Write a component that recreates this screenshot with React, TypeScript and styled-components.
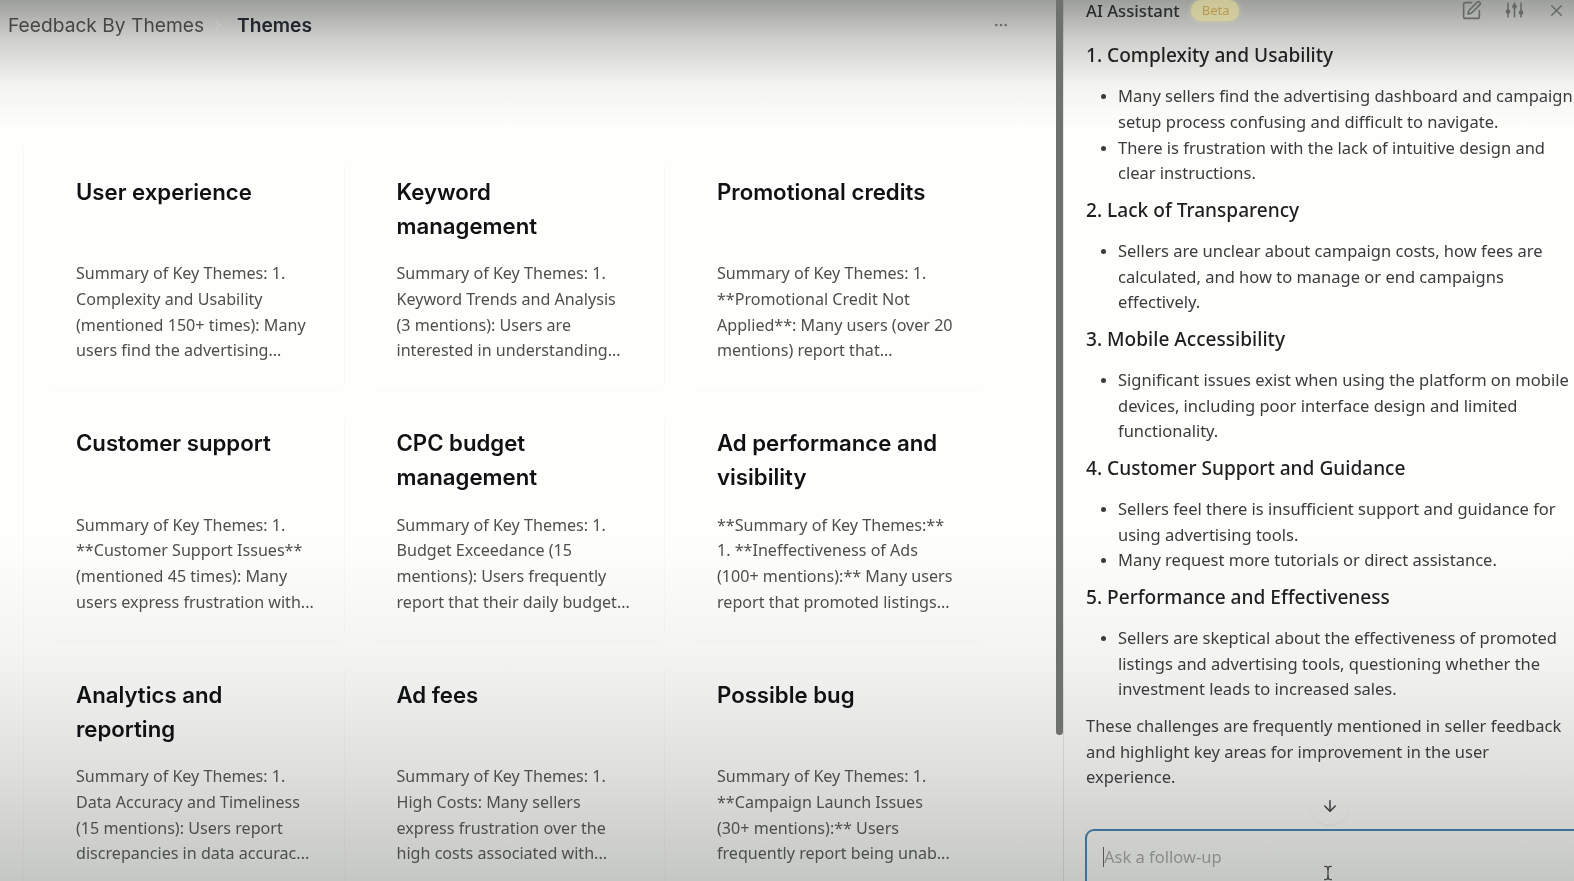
import { ArrowDown, ChevronRight, Ellipsis, SquarePen, TextCursor, X } from 'lucide-react';
import styled, { createGlobalStyle } from 'styled-components';

const themes = [
  {
    title: 'User experience',
    lines: ['Summary of Key Themes: 1.', 'Complexity and Usability', '(mentioned 150+ times): Many', 'users find the advertising...'],
  },
  {
    title: 'Keyword management',
    lines: ['Summary of Key Themes: 1.', 'Keyword Trends and Analysis', '(3 mentions): Users are', 'interested in understanding...'],
  },
  {
    title: 'Promotional credits',
    lines: ['Summary of Key Themes: 1.', '**Promotional Credit Not', 'Applied**: Many users (over 20', 'mentions) report that...'],
  },
  {
    title: 'Customer support',
    lines: ['Summary of Key Themes: 1.', '**Customer Support Issues**', '(mentioned 45 times): Many', 'users express frustration with...'],
  },
  {
    title: 'CPC budget management',
    lines: ['Summary of Key Themes: 1.', 'Budget Exceedance (15', 'mentions): Users frequently', 'report that their daily budget...'],
  },
  {
    title: 'Ad performance and visibility',
    lines: ['**Summary of Key Themes:**', '1. **Ineffectiveness of Ads', '(100+ mentions):** Many users', 'report that promoted listings...'],
  },
  {
    title: 'Analytics and reporting',
    lines: ['Summary of Key Themes: 1.', 'Data Accuracy and Timeliness', '(15 mentions): Users report', 'discrepancies in data accurac...'],
  },
  {
    title: 'Ad fees',
    lines: ['Summary of Key Themes: 1.', 'High Costs: Many sellers', 'express frustration over the', 'high costs associated with...'],
  },
  {
    title: 'Possible bug',
    lines: ['Summary of Key Themes: 1.', '**Campaign Launch Issues', '(30+ mentions):** Users', 'frequently report being unab...'],
  },
];

const sections = [
  {
    heading: '1. Complexity and Usability',
    bullets: [
      ['Many sellers find the advertising dashboard and campaign', 'setup process confusing and difficult to navigate.'],
      ['There is frustration with the lack of intuitive design and', 'clear instructions.'],
    ],
  },
  {
    heading: '2. Lack of Transparency',
    bullets: [['Sellers are unclear about campaign costs, how fees are', 'calculated, and how to manage or end campaigns', 'effectively.']],
  },
  {
    heading: '3. Mobile Accessibility',
    bullets: [['Significant issues exist when using the platform on mobile', 'devices, including poor interface design and limited', 'functionality.']],
  },
  {
    heading: '4. Customer Support and Guidance',
    bullets: [
      ['Sellers feel there is insufficient support and guidance for', 'using advertising tools.'],
      ['Many request more tutorials or direct assistance.'],
    ],
  },
  {
    heading: '5. Performance and Effectiveness',
    bullets: [['Sellers are skeptical about the effectiveness of promoted', 'listings and advertising tools, questioning whether the', 'investment leads to increased sales.']],
  },
];

const GlobalStyle = createGlobalStyle`
  html, body {
    margin: 0;
    padding: 0;
    overflow: hidden;
  }
`;

const Page = styled.div`
  display: flex;
  width: 1574px;
  height: 881px;
  overflow: hidden;
  font-family: 'Inter', sans-serif;
  filter: blur(0.45px);
  background: linear-gradient(
    180deg,
    #9d9f9d 0,
    #cfd0ce 40px,
    #f3f3f1 85px,
    #fefefc 130px,
    #fefefc 540px,
    #f3f4f2 660px,
    #dfe0de 770px,
    #c5c7c5 881px
  );
`;

const Main = styled.main`
  width: 1056px;
  flex-shrink: 0;
`;

const Breadcrumb = styled.header`
  display: flex;
  align-items: center;
  height: 50px;
  padding: 0 47px 0 8px;
  font-size: 19.2px;
  color: #454745;
`;

const CrumbArrow = styled.span`
  display: flex;
  margin: 0 11px 0 6px;
  color: #c6c7c5;
`;

const CurrentCrumb = styled.span`
  flex: 1;
  font-weight: 600;
  color: #20262c;
`;

const MoreButton = styled.span`
  display: flex;
  color: #6a6c6a;
`;

const ThemeGrid = styled.section`
  display: grid;
  grid-template-columns: repeat(3, 320.5px);
  grid-auto-rows: 251.6px;
  margin: 95px 0 0 23px;
  padding-top: 4.5px;
  border-left: 1px solid rgba(0, 0, 0, 0.02);
`;

const ThemeCard = styled.article`
  position: relative;
  box-sizing: border-box;
  padding: 25px 30px 0 52px;

  &::before {
    content: '';
    position: absolute;
    top: 16px;
    right: 0;
    height: 218px;
    border-right: 1px solid rgba(0, 0, 0, 0.018);
  }

  &:nth-child(3n)::before {
    display: none;
  }

  &::after {
    content: '';
    position: absolute;
    top: 240px;
    left: 30px;
    right: 6px;
    border-bottom: 1px solid rgba(0, 0, 0, 0.018);
  }
`;

const ThemeTitle = styled.h2`
  height: 68px;
  margin: 0 0 18.5px;
  font-size: 22.2px;
  font-weight: 600;
  line-height: 34px;
  color: #0f1112;
`;

const ThemeLine = styled.div`
  font-family: 'Noto Sans', sans-serif;
  font-size: 16.1px;
  line-height: 25.75px;
  white-space: nowrap;
  color: #4d4f4d;
`;

const Scrollbar = styled.div`
  width: 7px;
  height: 735px;
  flex-shrink: 0;
  border-radius: 0 0 4px 4px;
  background: #6f716f;
`;

const Assistant = styled.aside`
  flex: 1;
  min-width: 0;
  padding-left: 22px;
  border-left: 1px solid rgba(0, 0, 0, 0.09);
  font-family: 'Noto Sans', sans-serif;
`;

const AssistantHeader = styled.header`
  display: flex;
  align-items: center;
  height: 20px;
  padding-bottom: 2px;
  font-size: 16.7px;
  font-weight: 500;
  color: #2b2d2d;
`;

const BetaBadge = styled.span`
  margin-left: 11px;
  padding: 0 9px 0 11px;
  border-radius: 10px;
  font-size: 13px;
  font-weight: 400;
  line-height: 21px;
  color: #b89a50;
  background: rgba(222, 214, 150, 0.7);
  box-shadow: 0 0 5px rgba(222, 214, 150, 0.7);
`;

const HeaderIcons = styled.div`
  display: flex;
  align-items: center;
  gap: 23px;
  margin-left: auto;
  margin-right: 8px;
  color: #666866;
`;

const Messages = styled.div`
  padding-top: 20px;
  color: #3a3c3b;
`;

const SectionHeading = styled.h3`
  margin: 0 0 15px;
  font-size: 19.1px;
  font-weight: 500;
  line-height: 26px;
  color: #1e201f;
`;

const BulletList = styled.ul`
  margin: 0 0 10.75px;
  padding: 0 0 0 32px;
`;

const Bullet = styled.li`
  font-size: 16.5px;
  line-height: 25.75px;
  white-space: nowrap;

  &::marker {
    font-size: 14px;
  }
`;

const Closing = styled.p`
  margin: 0;
  font-size: 16.5px;
  line-height: 25.75px;
  white-space: nowrap;
`;

const ScrollDown = styled.div`
  display: flex;
  justify-content: center;
  align-items: center;
  width: 38px;
  height: 38px;
  margin: -3px 0 0 225px;
  border-radius: 50%;
  box-shadow: 0 1px 1px rgba(0, 0, 0, 0.05);
  color: #3a3c3b;
`;

const FollowUp = styled.div`
  position: relative;
  box-sizing: border-box;
  width: 500px;
  height: 80px;
  margin: 4px 0 0 -1px;
  padding: 14px 16px;
  border: 2px solid #3f7099;
  border-radius: 9px;
  font-size: 16.5px;
  line-height: 24px;
  color: #8a8c8a;
`;

const Caret = styled.span`
  display: inline-block;
  width: 1px;
  height: 20px;
  vertical-align: -4px;
  background: #555;
`;

const MouseCursor = styled.span`
  position: absolute;
  top: 34px;
  left: 233px;
  display: flex;
  color: #444;
`;

function SlidersIcon() {
  return (
    <svg width="19" height="19" viewBox="0 0 19 19" fill="currentColor" stroke="currentColor" strokeWidth="1.5">
      <path d="M3 1.5v15M9.5 1.5v15M16 1.5v15" fill="none" />
      <circle cx="3" cy="10.5" r="1.6" />
      <circle cx="9.5" cy="5.5" r="1.6" />
      <circle cx="16" cy="11.5" r="1.6" />
    </svg>
  );
}

function ThemeCardItem({ title, lines }: { title: string; lines: string[] }) {
  return (
    <ThemeCard>
      <ThemeTitle>{title}</ThemeTitle>
      {lines.map((line) => (
        <ThemeLine key={line}>{line}</ThemeLine>
      ))}
    </ThemeCard>
  );
}

export default function App() {
  return (
    <Page>
      <GlobalStyle />
      <Main>
        <Breadcrumb>
          <span>Feedback By Themes</span>
          <CrumbArrow>
            <ChevronRight size={16} />
          </CrumbArrow>
          <CurrentCrumb>Themes</CurrentCrumb>
          <MoreButton>
            <Ellipsis size={16} />
          </MoreButton>
        </Breadcrumb>
        <ThemeGrid>
          {themes.map((theme) => (
            <ThemeCardItem key={theme.title} title={theme.title} lines={theme.lines} />
          ))}
        </ThemeGrid>
      </Main>
      <Scrollbar />
      <Assistant>
        <AssistantHeader>
          AI Assistant
          <BetaBadge>Beta</BetaBadge>
          <HeaderIcons>
            <SquarePen size={21} strokeWidth={1.8} />
            <SlidersIcon />
            <X size={19} strokeWidth={1.8} />
          </HeaderIcons>
        </AssistantHeader>
        <Messages>
          {sections.map((section) => (
            <div key={section.heading}>
              <SectionHeading>{section.heading}</SectionHeading>
              <BulletList>
                {section.bullets.map((lines) => (
                  <Bullet key={lines[0]}>
                    {lines.map((line) => (
                      <div key={line}>{line}</div>
                    ))}
                  </Bullet>
                ))}
              </BulletList>
            </div>
          ))}
          <Closing>
            These challenges are frequently mentioned in seller feedback
            <br />
            and highlight key areas for improvement in the user
            <br />
            experience.
          </Closing>
        </Messages>
        <ScrollDown>
          <ArrowDown size={18} />
        </ScrollDown>
        <FollowUp>
          <Caret />
          Ask a follow-up
          <MouseCursor>
            <TextCursor size={16} />
          </MouseCursor>
        </FollowUp>
      </Assistant>
    </Page>
  );
}
